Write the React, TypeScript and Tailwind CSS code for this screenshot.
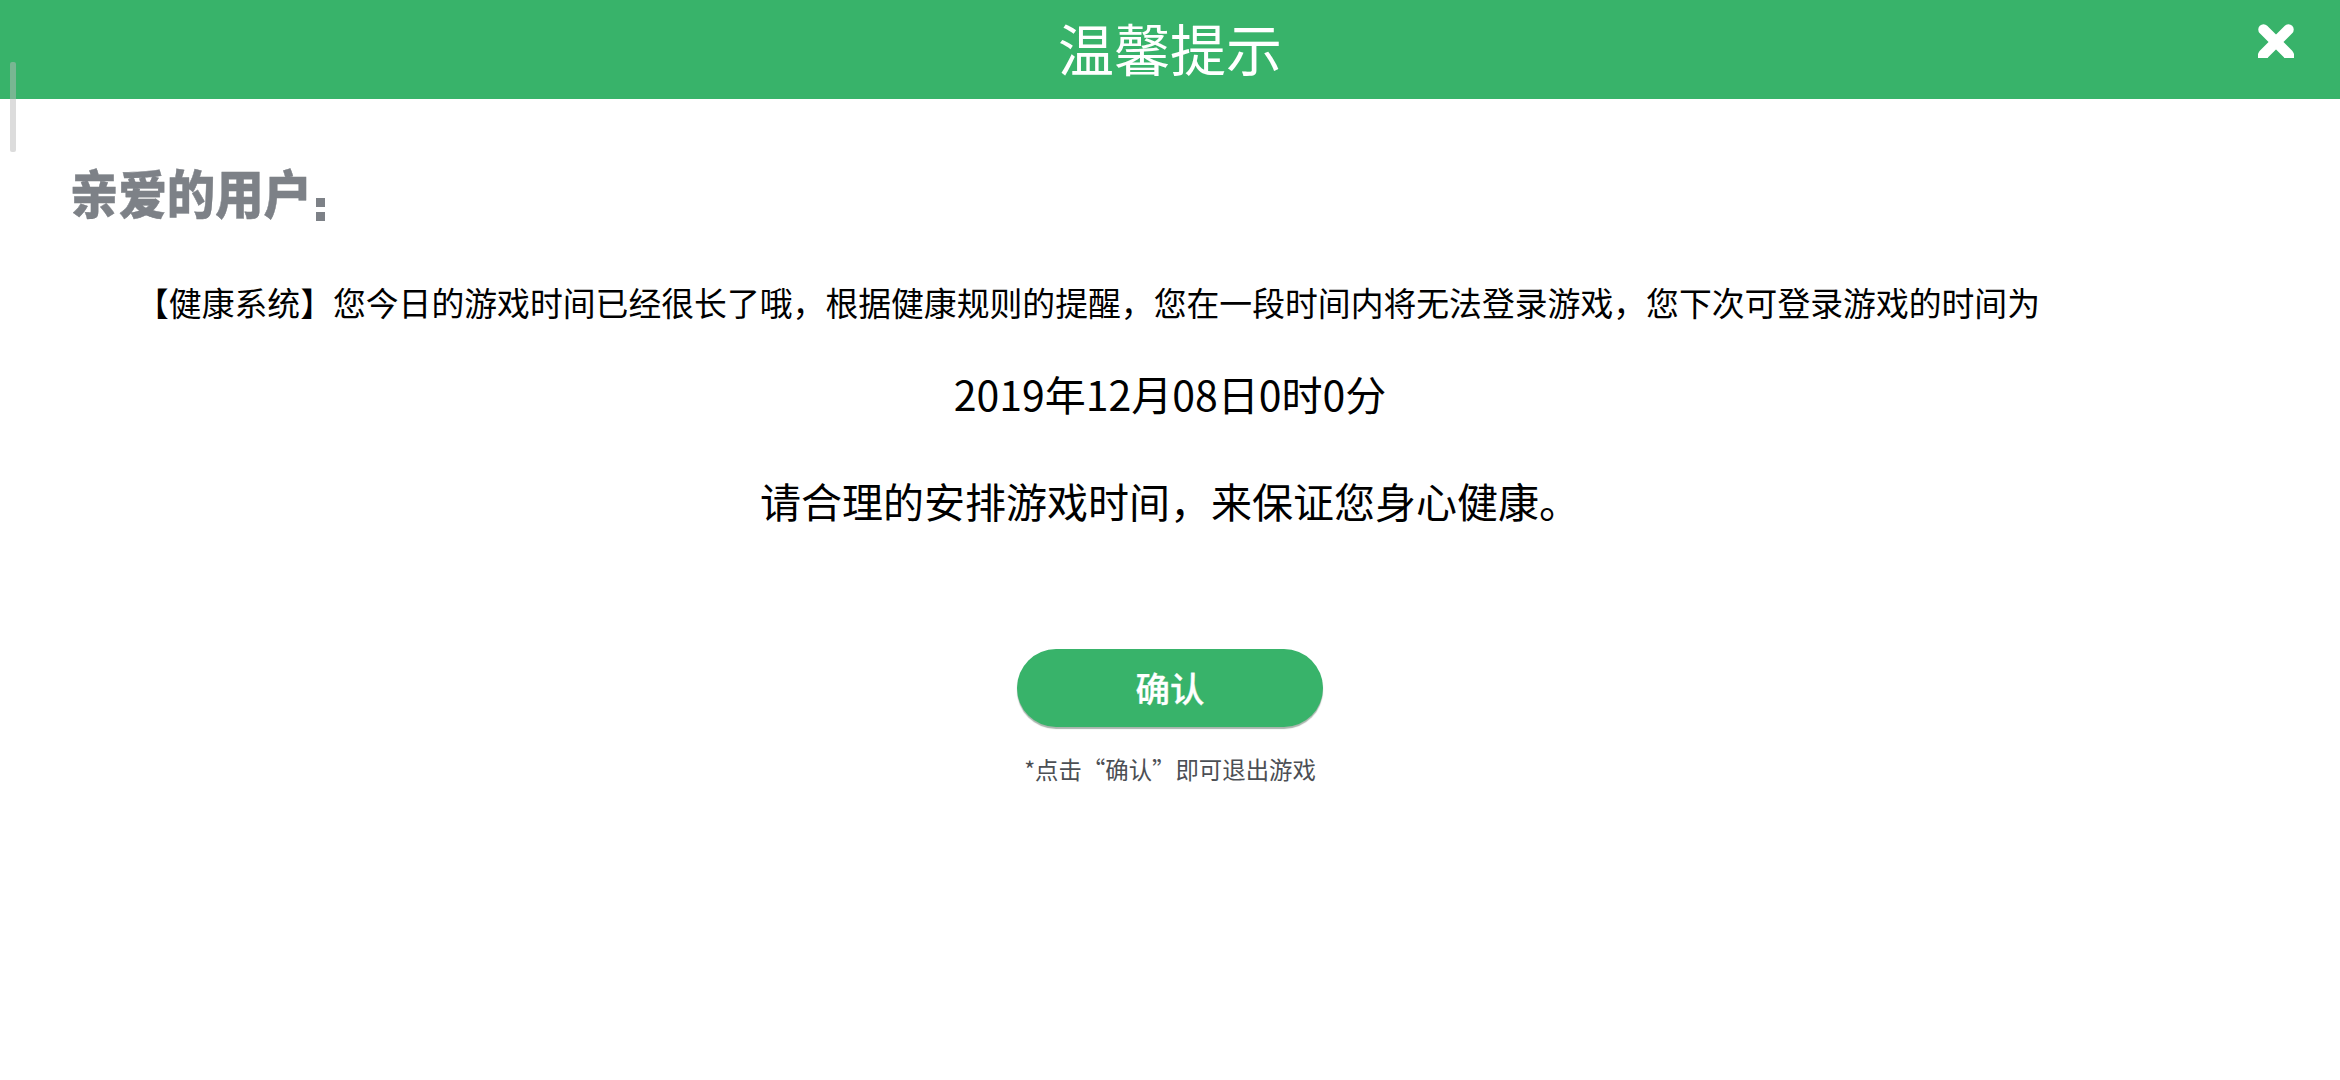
import React, { useState } from "react";

const CloseIcon = () => (
  <svg width="36" height="34" viewBox="0 0 36 34" className="block">
    <path
      d="M5.5 5.5 L30.5 30.5 M30.5 5.5 L5.5 30.5"
      fill="none"
      stroke="#ffffff"
      strokeWidth="10.5"
      strokeLinecap="round"
    />
    <path d="M0 30 L4 26 L10 34 H0 Z M36 30 L32 26 L26 34 H36 Z" fill="#ffffff" />
  </svg>
);

const App = () => {
  const [open, setOpen] = useState(true);

  if (!open) return null;

  return (
    <div className="relative flex flex-col h-screen w-full overflow-hidden bg-white font-['Noto_Sans_CJK_SC',sans-serif] text-black">

      {/* header */}
      <header className="grid grid-cols-[1fr_auto_1fr] h-[99px] shrink-0 bg-[#38b36a] text-white">
        <h1 className="col-start-2 mt-[7px] text-[56px] leading-[80px] whitespace-nowrap">温馨提示</h1>
        <button
          type="button"
          aria-label="关闭"
          onClick={() => setOpen(false)}
          className="justify-self-end self-start mt-6 mr-[46px]"
        >
          <CloseIcon />
        </button>
      </header>

      {/* scroll indicator, lies over the header edge */}
      <div className="absolute left-[10px] top-[62px] w-[6px] h-[90px] rounded-[2px] bg-[#b9b9b9]/50" />

      <main className="flex flex-col items-center">
        <div className="self-start flex mt-[60px] ml-[70px] h-[70px] text-[#7d8187]">
          <h2 className="w-[245px] text-[48.4px] leading-[66px] font-black whitespace-nowrap origin-center scale-y-[1.07] [-webkit-text-stroke:0.4px_#7d8187]">
            亲爱的用户
          </h2>
          <div className="flex flex-col gap-[5px] mt-[39px] ml-[1px]">
            <span className="size-[9px] bg-[#7d8187]" />
            <span className="size-[9px] bg-[#7d8187]" />
          </div>
        </div>

        <p className="self-start mt-[49px] ml-[136px] text-[32.83px] leading-[48px] whitespace-nowrap">
          【健康系统】您今日的游戏时间已经很长了哦，根据健康规则的提醒，您在一段时间内将无法登录游戏，您下次可登录游戏的时间为
        </p>

        <p className="mt-[37px] text-[41px] leading-[60px] whitespace-nowrap">
          2019年12月08日0时0分
        </p>

        <p className="mt-[47px] text-[41px] leading-[60px] whitespace-nowrap">
          请合理的安排游戏时间，来保证您身心健康。
        </p>

        <button
          type="button"
          onClick={() => setOpen(false)}
          className="mt-[119px] w-[306px] h-[78px] pb-[2px] rounded-full bg-[#38b36a] text-white text-[34.5px] leading-[76px] font-medium shadow-[0_2px_1px_#a9b5ad] [-webkit-text-stroke:0.3px_#ffffff]"
        >
          确认
        </button>

        <p className="mt-[24px] text-[23.4px] leading-9 text-[#4c4f54] whitespace-nowrap">
          *点击“确认”即可退出游戏
        </p>
      </main>
    </div>
  );
};

export default App;
